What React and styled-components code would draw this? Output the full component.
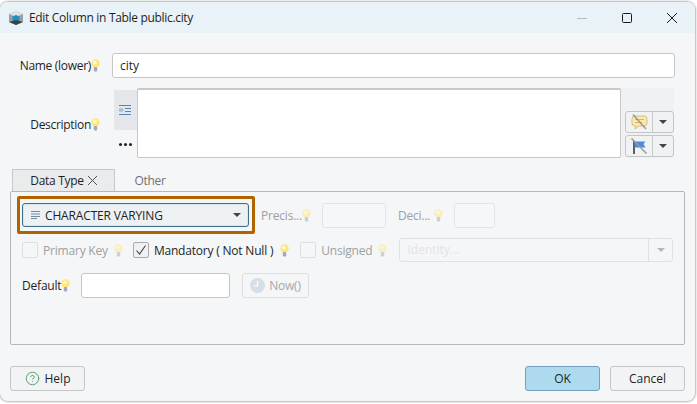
import styled, { createGlobalStyle } from "styled-components";
import { CircleHelp } from "lucide-react";

const GlobalStyle = createGlobalStyle`
  html, body {
    margin: 0;
    padding: 0;
    background: #fff;
    min-height: 404px;
  }
  body {
    font-family: "Open Sans", "Noto Sans", sans-serif;
    font-size: 12px;
    color: #1f1f1f;
    white-space: nowrap;
  }
`;

const Win = styled.div`
  width: 695px;
  height: 399px;
  margin-top: 2px;
  box-sizing: border-box;
  background: #f4f6f8;
  border-radius: 8px;
  box-shadow: 0 0 2px 1px #b4b4b4;
  overflow: hidden;
  display: flex;
  flex-direction: column;
`;

const TitleBar = styled.div`
  height: 31px;
  flex: none;
  background: #e9f3f7;
  display: flex;
  align-items: center;
  padding-left: 8px;
  gap: 5px;
`;

const Title = styled.span`
  flex: 1;
  font-size: 12px;
  letter-spacing: -0.32px;
`;

const WinControls = styled.div`
  display: flex;
  align-items: center;
  gap: 35px;
  padding-right: 18px;
`;

const Body = styled.div`
  flex: 1;
  display: flex;
  flex-direction: column;
  padding: 20px 10px 10px;
`;

const NameRow = styled.div`
  display: flex;
  align-items: center;
  height: 25px;
  padding-right: 10px;
`;

const LabelCell = styled.div`
  width: 90px;
  flex: none;
  display: flex;
  justify-content: flex-end;
  align-items: center;
  margin-right: 12px;
`;

const LabelText = styled.span`
  letter-spacing: -0.3px;
`;

const Input = styled.div`
  box-sizing: border-box;
  height: 25px;
  width: ${(p) => (p.$w ? `${p.$w}px` : "auto")};
  flex: ${(p) => (p.$w ? "none" : 1)};
  margin-left: ${(p) => p.$ml || 0}px;
  background: ${(p) => (p.$disabled ? "#f5f7f9" : "#fff")};
  border: 1px solid ${(p) => (p.$disabled ? "#e2e4e6" : "#c4c6c8")};
  border-radius: 3px;
  padding: 0 7px;
  line-height: 23px;
`;

const DescRow = styled.div`
  display: flex;
  height: 70px;
  margin-top: 10px;
  padding-right: 11px;
`;

const DescLabel = styled(LabelCell)`
  margin-right: 14px;
  padding-top: 2px;
`;

const DescTools = styled.div`
  width: 23px;
  flex: none;
  padding-top: 2px;
  display: flex;
  flex-direction: column;
`;

const FormatTool = styled.div`
  height: 40px;
  background: #e4e6e9;
  display: flex;
  align-items: center;
  justify-content: center;
`;

const MoreDots = styled.div`
  flex: 1;
  display: flex;
  align-items: center;
  justify-content: center;
  gap: 2px;
  padding-top: 1px;
  margin-left: -1px;

  i {
    width: 3px;
    height: 3px;
    border-radius: 50%;
    background: #222;
  }
`;

const DescArea = styled.div`
  flex: 1;
  background: #fff;
  border: 1px solid #c8c8c8;
  border-top-width: 2px;
  border-radius: 2px;
  box-sizing: border-box;
`;

const DescSide = styled.div`
  width: 53px;
  flex: none;
  background: #f0f1f3;
  display: flex;
  flex-direction: column;
  justify-content: flex-end;
  align-items: flex-start;
  gap: 2px;
  padding-left: 4px;
  box-sizing: border-box;
  padding-bottom: 1px;
`;

const SplitButton = styled.div`
  display: flex;
  width: 49px;
  height: 22px;
  box-sizing: border-box;
  border: 1px solid #c3c5c7;
  border-radius: 3px;
  background: #f1f2f4;
`;

const SplitIcon = styled.div`
  width: 26px;
  display: flex;
  align-items: center;
  justify-content: center;
  border-right: 1px solid #c8cacc;
`;

const SplitArrow = styled.div`
  flex: 1;
  display: flex;
  align-items: center;
  justify-content: center;
`;

const Arrow = styled.span`
  width: 0;
  height: 0;
  flex: none;
  border-left: 4px solid transparent;
  border-right: 4px solid transparent;
  border-top: 4px solid ${(p) => p.$color || "#444"};
`;

const Tabs = styled.div`
  display: flex;
  height: 22px;
  margin-top: 11px;
  padding-left: 2px;
`;

const Tab = styled.div`
  box-sizing: border-box;
  width: ${(p) => p.$w}px;
  display: flex;
  align-items: center;
  justify-content: center;
  gap: 4px;
  letter-spacing: -0.3px;
  background: ${(p) => (p.$active ? "#e9ebed" : "transparent")};
  border: 1px solid ${(p) => (p.$active ? "#c6c8ca" : "transparent")};
  border-bottom: 0;
  color: ${(p) => (p.$active ? "#1f1f1f" : "#707070")};
`;

const Panel = styled.div`
  box-sizing: border-box;
  height: 154px;
  border: 1px solid #b5b7b8;
  border-radius: 2px;
  padding: 4px 11px 0 6px;
  display: flex;
  flex-direction: column;
`;

const TypeRow = styled.div`
  display: flex;
  align-items: center;
  height: 38px;
`;

const Highlight = styled.div`
  box-sizing: border-box;
  width: 238px;
  height: 38px;
  flex: none;
  border: 3px solid #b36200;
  border-radius: 2px;
  padding: 4px 3px 4px 2px;
  margin-right: 6px;
`;

const TypeCombo = styled.div`
  box-sizing: border-box;
  height: 100%;
  background: #eef1f3;
  border: 1px solid #3d6f8c;
  border-radius: 3px;
  box-shadow: inset 0 0 0 1px #d7e8f1;
  display: flex;
  align-items: center;
  padding: 0 7px 0 8px;
  gap: 4px;
  letter-spacing: -0.15px;
`;

const TypeName = styled.span`
  flex: 1;
`;

const Muted = styled.span`
  color: #9d9fa1;
  margin-left: ${(p) => p.$ml || 0}px;
  letter-spacing: -0.2px;
`;

const CheckRow = styled.div`
  display: flex;
  align-items: center;
  height: 24px;
  margin-top: 4px;
  padding-left: 5px;
`;

const CheckBox = styled.span`
  box-sizing: border-box;
  width: 16px;
  height: 16px;
  flex: none;
  border: 1px solid ${(p) => (p.$on ? "#a9abad" : "#dcdee0")};
  border-radius: 2px;
  background: ${(p) => (p.$on ? "#f0f1f3" : "#f4f6f8")};
  display: flex;
  align-items: center;
  justify-content: center;
  margin-left: ${(p) => p.$ml || 0}px;
  margin-right: 5px;
`;

const Strong = styled.span`
  letter-spacing: -0.2px;
`;

const IdentityCombo = styled.div`
  box-sizing: border-box;
  width: 274px;
  height: 24px;
  flex: none;
  margin-left: 12px;
  display: flex;
  border: 1px solid #dfe1e3;
  border-radius: 3px;
  color: #e4e4e4;
  line-height: 22px;
`;

const IdentityText = styled.span`
  flex: 1;
  padding-left: 7px;
  border-right: 1px solid #dfe1e3;
`;

const IdentityArrow = styled.div`
  width: 23px;
  display: flex;
  align-items: center;
  justify-content: center;
`;

const DefaultRow = styled.div`
  display: flex;
  align-items: center;
  height: 25px;
  margin-top: 11px;
  padding-left: 5px;
`;

const DefaultLabel = styled.div`
  width: 59px;
  flex: none;
  display: flex;
  align-items: center;
`;

const NowButton = styled.div`
  box-sizing: border-box;
  width: 67px;
  height: 25px;
  margin-left: 12px;
  border: 1px solid #dcdee0;
  border-radius: 3px;
  color: #a5a7a9;
  display: flex;
  align-items: center;
  justify-content: center;
  gap: 4px;
  letter-spacing: -0.2px;
`;

const Footer = styled.div`
  display: flex;
  align-items: center;
  margin-top: 21px;
  height: 25px;
`;

const Button = styled.div`
  box-sizing: border-box;
  width: 75px;
  height: 25px;
  display: flex;
  align-items: center;
  justify-content: center;
  gap: 5px;
  border: 1px solid ${(p) => (p.$primary ? "#6fa3bf" : "#c3c5c7")};
  border-radius: 3px;
  background: ${(p) => (p.$primary ? "#aedaef" : "#f2f3f5")};
  margin-left: ${(p) => p.$ml || 0}px;
`;

const Spacer = styled.div`
  flex: 1;
`;

const BulbSvg = styled.svg`
  flex: none;
  margin-left: ${(p) => p.$ml || 0}px;
  opacity: ${(p) => (p.$dim ? 0.5 : 1)};
`;

const Bulb = ({ dim, ml }) => (
  <BulbSvg width="9" height="13" viewBox="0 0 9 13" $dim={dim} $ml={ml}>
    <circle cx="4.5" cy="4.5" r="4.2" fill="#fde77c" />
    <circle cx="3.8" cy="3.6" r="2" fill="#fff6c4" />
    <rect x="2.8" y="8" width="3.4" height="4.5" rx="1" fill="#a9a4c0" />
  </BulbSvg>
);

const AppIcon = () => (
  <svg width="16" height="16" viewBox="0 0 16 16">
    <path d="M8 1 L15 4 V12 L8 15 L1 12 V4 Z" fill="#9a9fa3" />
    <path d="M8 1 L15 4 L8 7 L1 4 Z" fill="#dfe3e6" />
    <path d="M4.5 6.5 L8 5 L11.5 6.5 V10.5 L8 12 L4.5 10.5 Z" fill="#1e8fc9" />
    <path d="M1 12 L8 15 L15 12 L8 10 Z" fill="#3c4246" />
  </svg>
);

const MinimizeIcon = () => (
  <svg width="10" height="10" viewBox="0 0 10 10">
    <path d="M0 5.5 H10" stroke="#b4bbbf" />
  </svg>
);

const MaximizeIcon = () => (
  <svg width="10" height="10" viewBox="0 0 10 10">
    <rect x="0.5" y="0.5" width="9" height="9" rx="1" fill="none" stroke="#1a1a1a" />
  </svg>
);

const CloseIcon = ({ size = 10, color = "#1a1a1a" }) => (
  <svg width={size} height={size} viewBox="0 0 10 10">
    <path d="M0 0 L10 10 M10 0 L0 10" stroke={color} strokeWidth="1" />
  </svg>
);

const FormatIcon = () => (
  <svg width="13" height="10" viewBox="0 0 13 10">
    <path d="M0 .5 H12 M6 3.5 H12 M6 6.5 H12 M0 9.5 H12" stroke="#4f89bd" />
    <path d="M1 3 V7 M3 3 V7 M0 5 H5" stroke="#8db4d6" />
  </svg>
);

const LinesIcon = () => (
  <svg width="10" height="8" viewBox="0 0 10 8">
    <path d="M0 .5 H9 M0 3 H9 M0 5.5 H9 M0 7.5 H6" stroke="#6f8ea3" />
  </svg>
);

const CommentIcon = () => (
  <svg width="17" height="16" viewBox="0 0 17 16">
    <path
      d="M4 2 H13 Q16 2 16 5 V9 Q16 12 13 12 H8 L4 15 L5 12 H4 Q1 12 1 9 V5 Q1 2 4 2 Z"
      fill="#fdeaa8"
      stroke="#d3bf85"
    />
    <path d="M4 5.5 H13 M4 8.5 H11" stroke="#d8b468" />
    <path d="M2 0.5 L15 15" stroke="#96999b" strokeWidth="1.5" />
  </svg>
);

const FlagIcon = () => (
  <svg width="16" height="17" viewBox="0 0 16 17">
    <path d="M3 3 V16" stroke="#10202c" strokeWidth="1.4" />
    <path d="M3.5 3.5 H14.5 L12.5 6 L14.5 9.5 H3.5 Z" fill="#4c8bdc" />
    <path d="M0.5 0.5 L15.5 15.5" stroke="#96999b" strokeWidth="1.5" />
  </svg>
);

const ClockIcon = () => (
  <svg width="15" height="15" viewBox="0 0 15 15">
    <circle cx="7.5" cy="7.5" r="7.5" fill="#d5dfe8" />
    <path d="M7.5 3 V8 H4" stroke="#fff" strokeWidth="1.2" fill="none" />
  </svg>
);

const TickIcon = () => (
  <svg width="12" height="12" viewBox="0 0 12 12">
    <path d="M1.5 6.5 L4.5 10 L10.5 1.5" stroke="#444" strokeWidth="1.1" fill="none" />
  </svg>
);

export default function App() {
  return (
    <>
      <GlobalStyle />
      <Win>
        <TitleBar>
          <AppIcon />
          <Title>Edit Column in Table public.city</Title>
          <WinControls>
            <MinimizeIcon />
            <MaximizeIcon />
            <CloseIcon />
          </WinControls>
        </TitleBar>
        <Body>
          <NameRow>
            <LabelCell>
              <LabelText>Name (lower)</LabelText>
              <Bulb />
            </LabelCell>
            <Input>city</Input>
          </NameRow>
          <DescRow>
            <DescLabel>
              <LabelText>Description</LabelText>
              <Bulb />
            </DescLabel>
            <DescTools>
              <FormatTool>
                <FormatIcon />
              </FormatTool>
              <MoreDots>
                <i />
                <i />
                <i />
              </MoreDots>
            </DescTools>
            <DescArea />
            <DescSide>
              <SplitButton>
                <SplitIcon>
                  <CommentIcon />
                </SplitIcon>
                <SplitArrow>
                  <Arrow />
                </SplitArrow>
              </SplitButton>
              <SplitButton>
                <SplitIcon>
                  <FlagIcon />
                </SplitIcon>
                <SplitArrow>
                  <Arrow />
                </SplitArrow>
              </SplitButton>
            </DescSide>
          </DescRow>
          <Tabs>
            <Tab $active $w={103}>
              Data Type <CloseIcon size={9} color="#444" />
            </Tab>
            <Tab $w={70}>Other</Tab>
          </Tabs>
          <Panel>
            <TypeRow>
              <Highlight>
                <TypeCombo>
                  <LinesIcon />
                  <TypeName>CHARACTER VARYING</TypeName>
                  <Arrow />
                </TypeCombo>
              </Highlight>
              <Muted>Precis...</Muted>
              <Bulb dim />
              <Input $w={64} $disabled $ml={11} />
              <Muted $ml={12}>Deci...</Muted>
              <Bulb dim ml={4} />
              <Input $w={41} $disabled $ml={11} />
            </TypeRow>
            <CheckRow>
              <CheckBox />
              <Muted>Primary Key</Muted>
              <Bulb dim ml={6} />
              <CheckBox $on $ml={10}>
                <TickIcon />
              </CheckBox>
              <Strong>Mandatory ( Not Null )</Strong>
              <Bulb ml={7} />
              <CheckBox $ml={11} />
              <Muted>Unsigned</Muted>
              <Bulb dim ml={6} />
              <IdentityCombo>
                <IdentityText>Identity...</IdentityText>
                <IdentityArrow>
                  <Arrow $color="#b5b7b9" />
                </IdentityArrow>
              </IdentityCombo>
            </CheckRow>
            <DefaultRow>
              <DefaultLabel>
                <Strong>Default</Strong>
                <Bulb />
              </DefaultLabel>
              <Input $w={149} />
              <NowButton>
                <ClockIcon />
                Now()
              </NowButton>
            </DefaultRow>
          </Panel>
          <Footer>
            <Button>
              <CircleHelp size={15} color="#5aa469" strokeWidth={1.6} />
              Help
            </Button>
            <Spacer />
            <Button $primary>OK</Button>
            <Button $ml={10}>Cancel</Button>
          </Footer>
        </Body>
      </Win>
    </>
  );
}
